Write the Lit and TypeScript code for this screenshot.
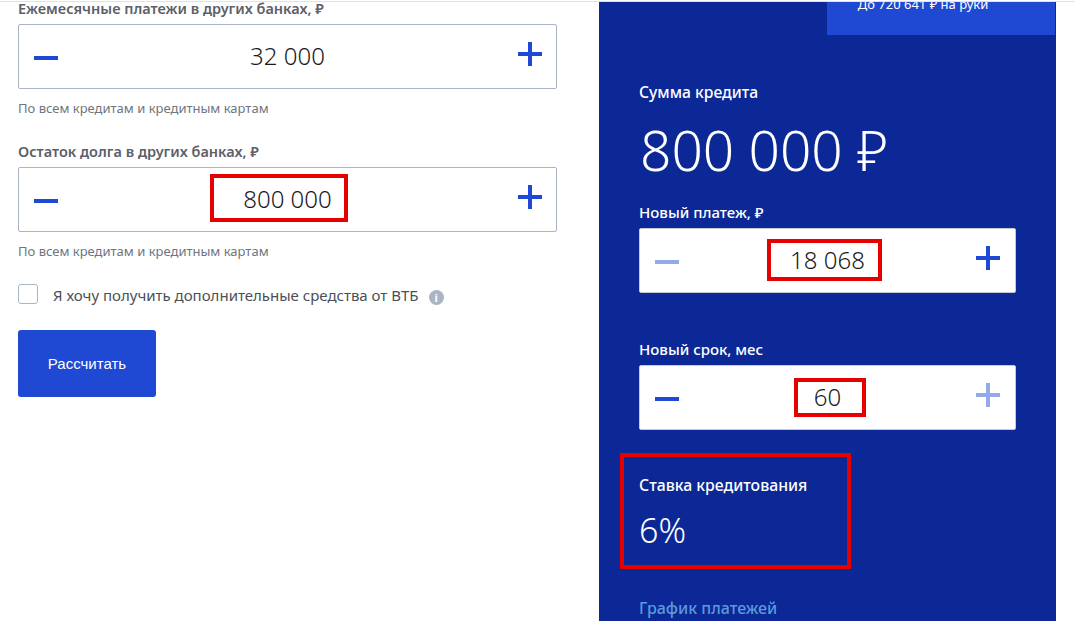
import { LitElement, html, css } from "lit";
import { customElement } from "lit/decorators.js";

const minus = (dim = false) => html`<svg class="ico minus" width="24" height="24" viewBox="0 0 24 24"><rect x="0" y="10" width="24" height="4" fill=${dim ? "#93a9e8" : "#2049d3"}></rect></svg>`;
const plus = (dim = false) => html`<svg class="ico plus" width="24" height="24" viewBox="0 0 24 24"><path d="M0 10h10V0h4v10h10v4H14v10h-4V14H0z" fill=${dim ? "#93a9e8" : "#2049d3"}></path></svg>`;

@customElement("app-root")
export class AppRoot extends LitElement {
  static styles = css`
    :host { display: block; width: 1075px; height: 621px; overflow: hidden; background: #fff; font-family: "Noto Sans", "Open Sans", sans-serif; }
    .topline { height: 1px; margin-top: 1px; background: #dfe2e8; }
    .page { display: flex; height: 619px; overflow: hidden; }
    .left { width: 599px; flex: none; padding-left: 18px; box-sizing: border-box; }
    .lfield { width: 539px; }
    .lfield:first-child { margin-top: -4px; }
    .lab { font-size: 14.5px; line-height: 20px; font-weight: 600; color: #5c6068; margin-bottom: 6px; }
    .help { font-size: 13px; line-height: 16px; color: #6d7580; margin-top: 11px; margin-bottom: 25px; }
    .stepper { position: relative; height: 65px; box-sizing: border-box; border: 1px solid #abb4c4; border-radius: 2px; background: #fff; display: flex; align-items: center; justify-content: space-between; padding: 0 14px 0 15px; }
    .ico { display: block; flex: none; }
    .minus { margin-top: 3px; }
    .plus { margin-top: -6px; }
    .val { position: absolute; left: 0; right: 0; top: 15px; text-align: center; font-size: 24px; line-height: 32px; color: #1a1a1a; font-weight: 300; }
    .mark { position: absolute; box-sizing: border-box; border: 4px solid #e60000; pointer-events: none; }
    .check { display: flex; align-items: center; margin-top: 6px; height: 22px; font-size: 15px; color: #4a4f57; }
    .box { width: 20px; height: 20px; box-sizing: border-box; border: 1px solid #abb4c4; border-radius: 3px; margin-right: 15px; margin-top: -2px; }
    .info { width: 15px; height: 15px; border-radius: 50%; background: #a9b4c6; color: #fff; margin-left: 10px; font-size: 11px; font-weight: 700; line-height: 15px; text-align: center; margin-top: 5px; }
    .btn { margin-top: 24px; width: 138px; height: 67px; background: #2049d3; border-radius: 3px; color: #fff; font-family: "Liberation Sans", Arial, sans-serif; font-size: 15px; display: flex; align-items: center; justify-content: center; }
    .panel { position: relative; width: 457px; flex: none; background: #0b2896; color: #fff; padding: 0 40px; box-sizing: border-box; }
    .tabs { display: flex; justify-content: flex-end; margin: 0 -39px 0 -40px; }
    .tab { width: 228px; height: 33px; box-sizing: border-box; padding-right: 36px; background: #2049d3; font-size: 13px; line-height: 16px; text-align: center; }
    .tab span { display: block; margin-top: -6px; }
    .ptitle { font-size: 15.7px; line-height: 20px; font-weight: 500; margin-top: 47px; }
    .sum { font-size: 55px; line-height: 66px; font-weight: 300; margin-top: 15px; margin-left: 1px; }
    .plab { font-size: 15px; line-height: 20px; font-weight: 500; margin-top: 19px; margin-bottom: 6px; }
    .plab.two { margin-top: 46px; }
    .panel .stepper { width: 377px; padding: 0 15px 0 15px; border-color: #c4cad6; }
    .rate { position: relative; width: 231px; height: 116px; margin: 23px 0 0 -19px; box-sizing: border-box; border: 4px solid #e60000; padding: 18px 0 0 15px; }
    .rate .t { font-size: 15.8px; line-height: 20px; font-weight: 500; }
    .rate .v { font-size: 34px; line-height: 40px; font-weight: 300; margin-top: 15px; }
    .link { font-size: 16px; line-height: 20px; font-weight: 500; color: #5b9bdc; margin-top: 29px; }
  `;

  render() {
    return html`
      <div class="topline"></div>
      <div class="page">
        <div class="left">
          <div class="lfield">
            <div class="lab">Ежемесячные платежи в других банках, ₽</div>
            <div class="stepper">${minus()}<div class="val">32 000</div>${plus()}</div>
            <div class="help">По всем кредитам и кредитным картам</div>
          </div>
          <div class="lfield">
            <div class="lab">Остаток долга в других банках, ₽</div>
            <div class="stepper">${minus()}<div class="val">800 000</div>${plus()}
              <div class="mark" style="left:191px;top:6px;width:138px;height:48px"></div>
            </div>
            <div class="help">По всем кредитам и кредитным картам</div>
          </div>
          <div class="check"><div class="box"></div>Я хочу получить дополнительные средства от ВТБ<div class="info">i</div></div>
          <div class="btn">Рассчитать</div>
        </div>
        <div class="panel">
          <div class="tabs"><div class="tab"><span>До 720 641 ₽ на руки</span></div></div>
          <div class="ptitle">Сумма кредита</div>
          <div class="sum">800 000 ₽</div>
          <div class="plab">Новый платеж, ₽</div>
          <div class="stepper">${minus(true)}<div class="val">18 068</div>${plus()}
            <div class="mark" style="left:127px;top:10px;width:115px;height:42px"></div>
          </div>
          <div class="plab two">Новый срок, мес</div>
          <div class="stepper">${minus()}<div class="val">60</div>${plus(true)}
            <div class="mark" style="left:154px;top:12px;width:72px;height:39px"></div>
          </div>
          <div class="rate"><div class="t">Ставка кредитования</div><div class="v">6%</div></div>
          <div class="link">График платежей</div>
        </div>
      </div>
    `;
  }
}
